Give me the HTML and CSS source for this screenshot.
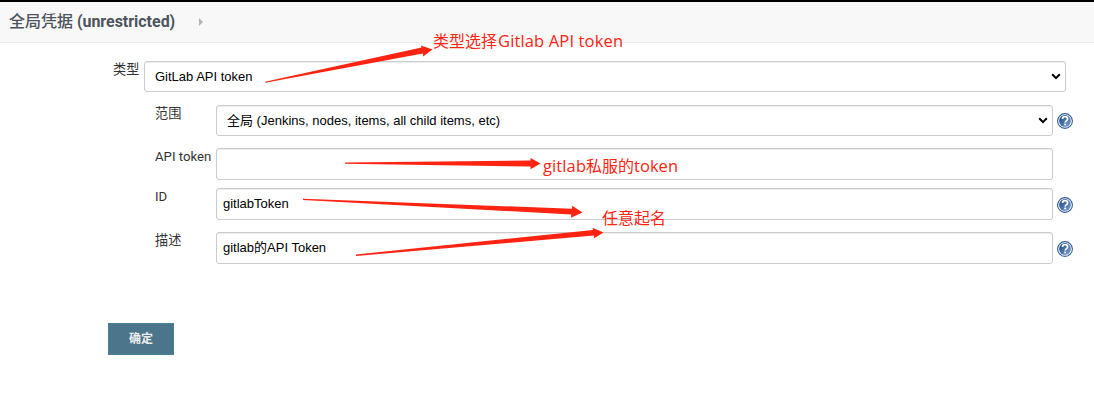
FILE: index.html
```html
<!DOCTYPE html>
<html lang="zh-CN">
<head>
<meta charset="utf-8">
<title>全局凭据</title>
<link rel="stylesheet" href="styles.css">
</head>
<body>
<svg class="defs" width="0" height="0">
  <defs>
    <linearGradient id="disc" x1="0" y1="0" x2="1" y2="1">
      <stop offset="0" stop-color="#16407f"/>
      <stop offset="1" stop-color="#7fa5d6"/>
    </linearGradient>
    <symbol id="help" viewBox="0 0 16 16">
      <circle cx="8" cy="8" r="7.400" fill="#fff" stroke="#345c94" stroke-width="1.100"/>
      <circle cx="8" cy="8" r="5.900" fill="url(#disc)"/>
      <path d="M5.500 6C5.500 4.300 6.500 3.700 8 3.700s2.600.8 2.600 2.200C10.600 7.600 8.300 7.700 8.200 9.600" fill="none" stroke="#fff" stroke-width="1.700"/>
      <rect x="7.200" y="10.600" width="2" height="1.800" fill="#fff"/>
    </symbol>
  </defs>
</svg>
<header class="breadcrumb">
  <span class="crumb"><span class="crumb-cn">全局凭据</span> (unrestricted)</span>
  <span class="crumb-arrow"></span>
</header>
<form class="form">
  <div class="row row-kind">
    <label class="label">类型</label>
    <div class="control select">
      <span class="value">GitLab API token</span>
      <svg class="chevron" viewBox="0 0 10 7"><path d="M1.200 1.300 5 5.100 8.800 1.300"/></svg>
    </div>
  </div>
  <div class="row row-scope">
    <label class="label">范围</label>
    <div class="control select">
      <span class="value">全局 (Jenkins, nodes, items, all child items, etc)</span>
      <svg class="chevron" viewBox="0 0 10 7"><path d="M1.200 1.300 5 5.100 8.800 1.300"/></svg>
    </div>
    <svg class="help"><use href="#help"/></svg>
  </div>
  <div class="row row-token">
    <label class="label">API token</label>
    <div class="control"></div>
  </div>
  <div class="row row-id">
    <label class="label">ID</label>
    <div class="control"><span class="value">gitlabToken</span></div>
    <svg class="help"><use href="#help"/></svg>
  </div>
  <div class="row row-desc">
    <label class="label">描述</label>
    <div class="control"><span class="value">gitlab的API Token</span></div>
    <svg class="help"><use href="#help"/></svg>
  </div>
  <button class="submit" type="button">确定</button>
</form>
<svg class="notes" viewBox="0 0 1094 404">
  <path d="M265 81.700 421.500 47.500l-.600-2L432.500 49.500 423.200 56.500l-.400-3L265.200 82.800Z"/>
  <path d="M345 162.600 530.500 160.500v-2.500L540.500 163.500 530.500 169.200v-2.700L345 163.700Z"/>
  <path d="M303 198.700 572 208.700l.200-3L582.500 212.500 571 217.700l.300-3.200L303 200Z"/>
  <path d="M356 254.500 593 230l-.500-2.200L603.500 232.500 594 238.200l-.200-2.600L356 256Z"/>
  <text x="433" y="47">类型选择<tspan class="latin" x="498" textLength="125">Gitlab API token</tspan></text>
  <text y="172"><tspan class="latin" x="543" textLength="43">gitlab</tspan><tspan x="586">私服的</tspan><tspan class="latin" x="634" textLength="44">token</tspan></text>
  <text x="602" y="224">任意起名</text>
</svg>
</body>
</html>
```
FILE: styles.css
```css
* { box-sizing: border-box; }
body {
  position: relative;
  margin: 0;
  height: 404px;
  overflow: hidden;
  background: #fff;
  font-family: "Liberation Sans", "Noto Sans CJK SC", sans-serif;
}
.defs { position: absolute; }
.breadcrumb {
  display: flex;
  align-items: center;
  height: 43px;
  padding: 0 9px 1px;
  border-top: 2px solid #000;
  border-bottom: 1px solid #ebedef;
  background: #f8f8f8;
}
.crumb {
  color: #4d545d;
  font: bold 16px/20px Roboto, "Noto Sans CJK SC", sans-serif;
  letter-spacing: -.02px;
  white-space: nowrap;
}
.crumb-cn { font-weight: 500; }
.crumb-arrow {
  margin-left: 24px;
  border: solid transparent;
  border-width: 4px 0 4px 4px;
  border-left-color: #b4b4b4;
}
.form { padding-top: 18px; }
.row { display: flex; width: 1094px; }
.label {
  flex: none;
  width: 61px;
  color: #333;
  font: 13.2px/17px Roboto, "Noto Sans CJK SC", sans-serif;
  white-space: nowrap;
}
.control {
  display: flex;
  align-items: center;
  justify-content: space-between;
  width: 837px;
  height: 32px;
  padding: 0 6px;
  border: 1px solid #ccc;
  border-radius: 3px;
  box-shadow: inset 0 1px 1px rgba(0, 0, 0, .075);
}
.value { color: #000; font-size: 13px; line-height: 16px; white-space: nowrap; }
.select { height: 31px; padding: 0 4px 0 10px; }
.chevron { width: 10px; height: 7px; fill: none; stroke: #000; stroke-width: 2; }
.row-kind { padding-left: 113px; }
.row-kind .label { width: 31px; }
.row-kind .control { width: 922px; }
.row-scope, .row-token, .row-id, .row-desc { padding-left: 155px; }
.row-scope { margin-top: 13px; }
.row-token { margin-top: 12px; }
.row-id { margin-top: 8px; }
.row-desc { margin-top: 12px; }
.help { width: 16px; height: 16px; margin: 8px 0 0 4px; }
.row-desc .help, .row-id .help { margin-top: 9px; }
.submit {
  display: block;
  width: 66px;
  height: 32px;
  margin: 59px 0 0 108px;
  padding: 0;
  border: 1px solid #4b829b;
  background: #4b758b;
  color: #eee;
  font: bold 12px/16px "Liberation Sans", "Noto Sans CJK SC", sans-serif;
}
.notes {
  position: absolute;
  top: 0;
  left: 0;
  width: 1094px;
  height: 404px;
  fill: #ff2412;
  font: 16px "Open Sans", "Noto Sans CJK SC", sans-serif;
}
.latin { font-size: 16.500px; }
```
